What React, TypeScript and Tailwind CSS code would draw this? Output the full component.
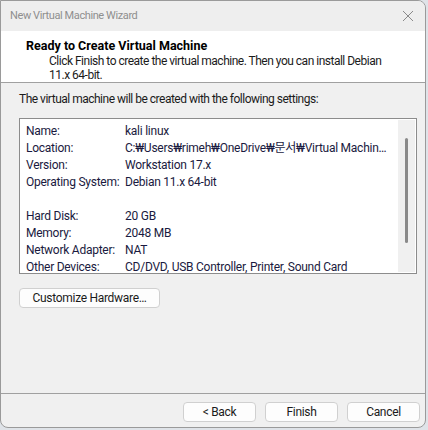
import React from "react";

const rows: [string, string][] = [
  ["Name:", "kali linux"],
  ["Location:", "C:\u20A9Users\u20A9rimeh\u20A9OneDrive\u20A9문서\u20A9Virtual Machin…"],
  ["Version:", "Workstation 17.x"],
  ["Operating System:", "Debian 11.x 64-bit"],
  ["", ""],
  ["Hard Disk:", "20 GB"],
  ["Memory:", "2048 MB"],
  ["Network Adapter:", "NAT"],
  ["Other Devices:", "CD/DVD, USB Controller, Printer, Sound Card"],
];

function Btn({ children, w }: { children: React.ReactNode; w: string }) {
  return (
    <div
      className={`${w} h-[20px] flex items-center justify-center bg-[#fdfdfd] border border-[#d0d0d0] rounded-[4px] text-[12px] tracking-[-0.3px] text-[#1b1b1b] leading-none`}
    >
      {children}
    </div>
  );
}

export default function App() {
  return (
    <div
      className="w-[428px] h-[430px] bg-[#dfe3e8] overflow-hidden"
      style={{ fontFamily: 'Roboto, "Noto Sans CJK KR", sans-serif' }}
    >
      <div className="w-[426px] h-[428px] bg-[#f0f0f0] border border-[#9a9a9a] rounded-tr-[8px] rounded-bl-[8px] rounded-br-[8px] overflow-hidden flex flex-col">
        {/* Title bar */}
        <div className="h-[30px] flex items-center justify-between pl-[9px] pr-[8px] bg-[#eeeeee]">
          <span className="text-[11px] tracking-[-0.4px] text-[#8f8f8f]">New Virtual Machine Wizard</span>
          <svg width="12" height="12" viewBox="0 0 12 12" className="mr-[3px]">
            <path d="M1 1 L11 11 M11 1 L1 11" stroke="#8a8a8a" strokeWidth="1" fill="none" />
          </svg>
        </div>
        {/* Header */}
        <div className="h-[52px] bg-white border-b border-[#a0a0a0] pl-[25px] pt-[7px]">
          <div className="text-[12.5px] font-bold text-black leading-[16px]">
            Ready to Create Virtual Machine
          </div>
          <div className="pl-[23px] text-[12px] tracking-[-0.5px] text-[#1b1b1b] leading-[14px] w-[370px]">
            Click Finish to create the virtual machine. Then you can install Debian 11.x 64-bit.
          </div>
        </div>
        {/* Body */}
        <div className="flex-1 flex flex-col px-[18px]">
          <div className="text-[12px] tracking-[-0.5px] text-[#1b1b1b] mt-[8px] leading-[16px]">
            The virtual machine will be created with the following settings:
          </div>
          <div className="mt-[11px] h-[156px] w-[398px] border border-[#8c8c8c] bg-white flex">
            <div className="flex-1 pl-[6px] pt-[3px] min-w-0">
              {rows.map(([k, v], i) => (
                <div key={i} className="flex h-[17px] items-center text-[12px] tracking-[-0.25px] text-[#1a1a40] whitespace-nowrap">
                  <span className="w-[99px] shrink-0">{k}</span>
                  <span>{v}</span>
                </div>
              ))}
            </div>
            <div className="w-[17px] shrink-0 bg-[#f0f0f0] my-[1px] mr-[1px] flex justify-center pt-[18px]">
              <div className="w-[3px] h-[105px] bg-[#8a8a8a] rounded-full" />
            </div>
          </div>
          <div className="mt-[14px]">
            <Btn w="w-[141px]">Customize Hardware…</Btn>
          </div>
        </div>
        {/* Footer */}
        <div className="h-[34px] border-t border-[#a0a0a0] flex justify-end items-start pt-[8px] pr-[5px] gap-[9px]">
          <Btn w="w-[73px]">&lt; Back</Btn>
          <Btn w="w-[73px]">Finish</Btn>
          <Btn w="w-[73px]">Cancel</Btn>
        </div>
      </div>
    </div>
  );
}
